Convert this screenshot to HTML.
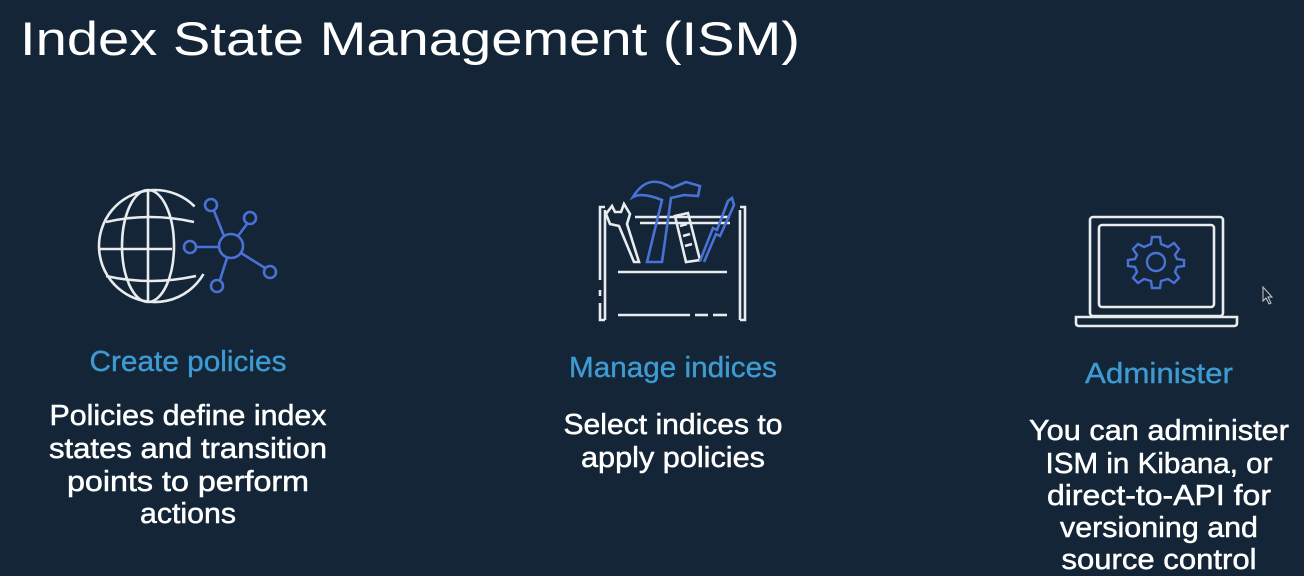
<!DOCTYPE html>
<html><head><style>
html,body{margin:0;padding:0;background:#132536;width:1304px;height:576px;overflow:hidden}
svg{display:block}
text{font-family:"Liberation Sans",sans-serif}
</style></head><body>
<svg width="1304" height="576" viewBox="0 0 1304 576">
<rect width="1304" height="576" fill="#132536"/>
<text x="20" y="55" font-size="47" fill="#fff" textLength="780" lengthAdjust="spacingAndGlyphs">Index State Management (ISM)</text>

<!-- globe -->
<g fill="none" stroke="#e8ecef" stroke-width="2.6">
<path d="M194.6 206.4 A56 56 0 1 0 203.5 274"/>
<ellipse cx="148" cy="246" rx="26" ry="56"/>
<line x1="148" y1="190" x2="148" y2="302"/>
<path d="M106 222 Q150 212 194 222"/>
<path d="M100 249 H172"/>
<path d="M106 276 Q150 286 196 276"/>
</g>
<g fill="none" stroke="#4a72d6" stroke-width="2.6">
<circle cx="231" cy="246" r="12"/>
<circle cx="190" cy="247" r="6"/><line x1="196" y1="247" x2="219" y2="247"/>
<circle cx="211" cy="205" r="6"/><line x1="214" y1="211" x2="224" y2="236"/>
<circle cx="250" cy="218" r="6"/><line x1="247" y1="224" x2="238" y2="236"/>
<circle cx="270" cy="272" r="6"/><line x1="265" y1="268" x2="241" y2="253"/>
<circle cx="217" cy="286" r="6"/><line x1="220" y1="280" x2="227" y2="258"/>
</g>

<!-- toolbox -->
<g fill="none" stroke="#e8ecef" stroke-width="2.6">
<path d="M605 207 H600 V280 M600 290 V296 M600 303 V320 H605 M605 210 V320 M740 207 H745 V320 H740 M740 210 V320"/>
<line x1="618" y1="272" x2="727" y2="272"/>
<line x1="618" y1="315" x2="690" y2="315"/>
<line x1="695" y1="315" x2="708" y2="315"/>
<line x1="713" y1="315" x2="727" y2="315"/>
<line x1="635" y1="217" x2="730" y2="217"/>
<line x1="640" y1="223" x2="730" y2="223"/>
<path d="M612 206 L606 214 L610 224 L619 226 L634 262 L639 262 L627 224 L630 214 L624 204 L621 212 L615 212 Z"/>
<path d="M675 216 L688 213 L700 260 L686 262 Z"/>
<path d="M680 226 L687 224 M683 236 L690 234 M685 246 L692 244"/>
</g>
<g fill="none" stroke="#4a72d6" stroke-width="2.6">
<path d="M647 262 L662 200 Q642 192 633 197 Q648 172 672 188 L686 182 L700 186 L698 196 L684 195 L671 198 L662 262 Z"/>
<path d="M704 262 L716 234 L720 236 L734 205 L732 198 L728 201 L717 230 L713 228 L700 261"/>
</g>

<!-- laptop -->
<g fill="none" stroke="#e8ecef" stroke-width="2.6">
<rect x="1090" y="217" width="133" height="99" rx="3"/>
<rect x="1099" y="225" width="115" height="82" rx="3"/>
<path d="M1076 317 H1237 V323 Q1237 326 1234 326 H1079 Q1076 326 1076 323 Z"/>
</g>
<g fill="none" stroke="#4a72d6" stroke-width="2.4">
<circle cx="1156" cy="262" r="9"/>
<path d="M1152 237 H1160 L1161 244 L1168 247 L1174 243 L1179 249 L1175 255 L1177 259 L1184 260 V266 L1177 267 L1175 272 L1179 278 L1174 283 L1168 279 L1161 281 L1160 288 H1152 L1151 281 L1144 279 L1138 283 L1133 278 L1137 272 L1135 267 L1128 266 V260 L1135 259 L1137 255 L1133 249 L1138 244 L1144 247 L1151 244 Z"/>
</g>

<g font-size="29" fill="#3e9ad0" text-anchor="middle" stroke="#3e9ad0" stroke-width="0.4">
<text x="188" y="371" textLength="197" lengthAdjust="spacingAndGlyphs">Create policies</text>
<text x="673" y="377" textLength="208" lengthAdjust="spacingAndGlyphs">Manage indices</text>
<text x="1159" y="383" textLength="148" lengthAdjust="spacingAndGlyphs">Administer</text>
</g>
<g font-size="29" fill="#fff" text-anchor="middle" stroke="#fff" stroke-width="0.5">
<text x="188" y="425" textLength="277" lengthAdjust="spacingAndGlyphs">Policies define index</text>
<text x="188" y="458" textLength="278" lengthAdjust="spacingAndGlyphs">states and transition</text>
<text x="188" y="491" textLength="242" lengthAdjust="spacingAndGlyphs">points to perform</text>
<text x="188" y="523" textLength="96" lengthAdjust="spacingAndGlyphs">actions</text>
<text x="673" y="434" textLength="219" lengthAdjust="spacingAndGlyphs">Select indices to</text>
<text x="673" y="467" textLength="184" lengthAdjust="spacingAndGlyphs">apply policies</text>
<text x="1159" y="440" textLength="260" lengthAdjust="spacingAndGlyphs">You can administer</text>
<text x="1159" y="473" textLength="227" lengthAdjust="spacingAndGlyphs">ISM in Kibana, or</text>
<text x="1159" y="505" textLength="224" lengthAdjust="spacingAndGlyphs">direct-to-API for</text>
<text x="1159" y="537" textLength="198" lengthAdjust="spacingAndGlyphs">versioning and</text>
<text x="1159" y="569" textLength="195" lengthAdjust="spacingAndGlyphs">source control</text>
</g>
<path d="M1263 287 V301 L1266 298 L1269 304 L1271 303 L1268 297 L1272 297 Z" fill="#132536" stroke="#ccc" stroke-width="1"/>
</svg>
</body></html>
